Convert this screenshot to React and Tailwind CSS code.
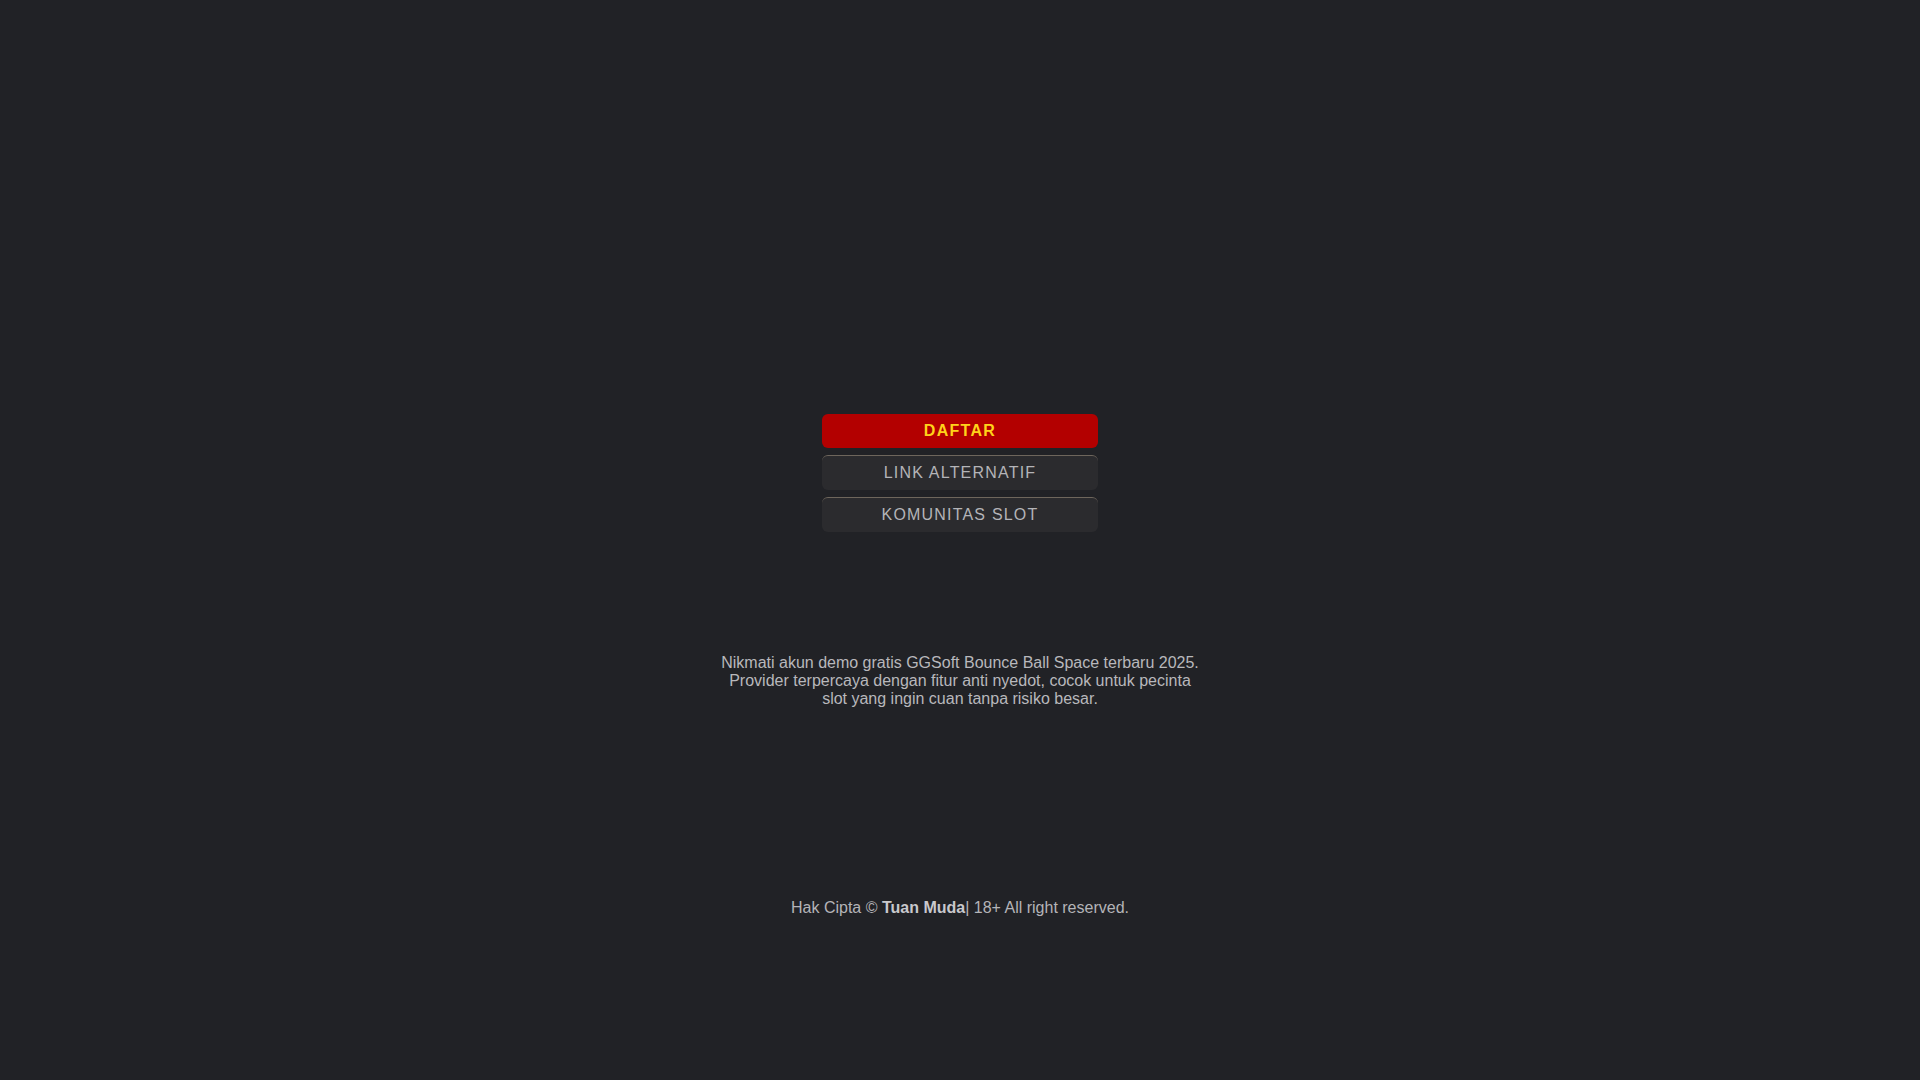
export default function App() {
  const links = [
    { label: 'LINK ALTERNATIF' },
    { label: 'KOMUNITAS SLOT' },
  ];

  return (
    <div className="min-h-screen bg-[#212226] font-['Liberation_Sans',Arial,sans-serif] flex flex-col items-center">
      <div className="h-[414px]" />

      {/* Buttons */}
      <div className="w-[276px] flex flex-col gap-[7px]">
        <a
          href="#"
          className="h-[34px] flex items-center justify-center rounded-md bg-[#b30000] text-[#ffd21a] font-bold text-[16px] tracking-[1.3px]"
        >
          DAFTAR
        </a>
        {links.map((l) => (
          <a
            key={l.label}
            href="#"
            className="h-[35px] flex items-center justify-center rounded-md bg-[#2b2b2e] border-t border-[#6e665c] text-[#b4b4b8] text-[16px] tracking-[1.2px]"
          >
            {l.label}
          </a>
        ))}
      </div>

      <p className="mt-[122px] w-[490px] text-center text-[16px] leading-[18px] text-[#b8b8bc]">
        Nikmati akun demo gratis GGSoft Bounce Ball Space terbaru 2025. Provider terpercaya dengan fitur anti nyedot, cocok untuk pecinta slot yang ingin cuan tanpa risiko besar.
      </p>

      <footer className="mt-[188px] text-[16px] text-[#b4b4b8]">
        Hak Cipta © <b className="text-[#c8c8cc]">Tuan Muda</b>| 18+ All right reserved.
      </footer>
    </div>
  );
}
